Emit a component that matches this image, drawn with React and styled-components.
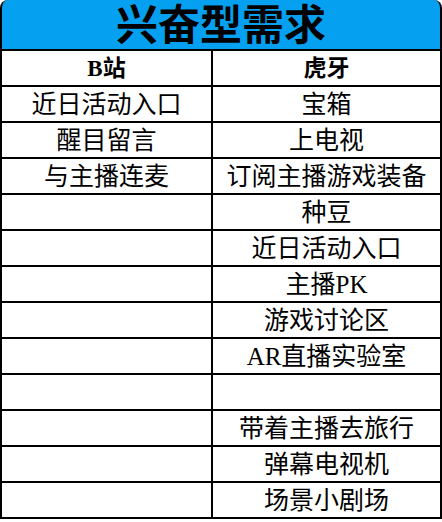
import React from "react";
import styled, { createGlobalStyle } from "styled-components";

const Global = createGlobalStyle`
  html, body { margin: 0; padding: 0; background: #ffffff; }
  body { font-family: "Liberation Serif", "Noto Sans CJK SC", serif; }
`;

const Sheet = styled.div`
  width: 442px;
  display: flex;
  flex-direction: column;
`;

const Title = styled.div`
  height: 49px;
  box-sizing: border-box;
  background: #06a0f0;
  border-left: 2px solid #000;
  border-right: 2px solid #000;
  border-radius: 8px 8px 0 0;
  display: flex;
  align-items: center;
  justify-content: center;
  font-family: "Liberation Serif", "Noto Sans CJK SC", serif;
  font-weight: 700;
  font-size: 42px;
  line-height: 1;
  color: #000;
  padding-top: 2px;
`;

const Grid = styled.div`
  display: grid;
  grid-template-columns: 209px 227px;
  grid-auto-rows: 34px;
  gap: 2px;
  padding: 2px;
  background: #000;
`;

const Cell = styled.div`
  background: #fff;
  display: flex;
  align-items: center;
  justify-content: center;
  font-family: "Liberation Serif", "Noto Sans CJK SC", serif;
  font-size: ${(p) => (p.$head ? "23px" : "25px")};
  font-weight: ${(p) => (p.$head ? 700 : 400)};
  color: #000;
  white-space: nowrap;
  line-height: 1;
  padding-top: 1px;
`;

const rows = [
  ["近日活动入口", "宝箱"],
  ["醒目留言", "上电视"],
  ["与主播连麦", "订阅主播游戏装备"],
  ["", "种豆"],
  ["", "近日活动入口"],
  ["", "主播PK"],
  ["", "游戏讨论区"],
  ["", "AR直播实验室"],
  ["", ""],
  ["", "带着主播去旅行"],
  ["", "弹幕电视机"],
  ["", "场景小剧场"],
];

export default function App() {
  return (
    <>
      <Global />
      <Sheet>
        <Title>兴奋型需求</Title>
        <Grid>
          <Cell $head>B站</Cell>
          <Cell $head>虎牙</Cell>
          {rows.map(([a, b], i) => (
            <React.Fragment key={i}>
              <Cell>{a}</Cell>
              <Cell>{b}</Cell>
            </React.Fragment>
          ))}
        </Grid>
      </Sheet>
    </>
  );
}
